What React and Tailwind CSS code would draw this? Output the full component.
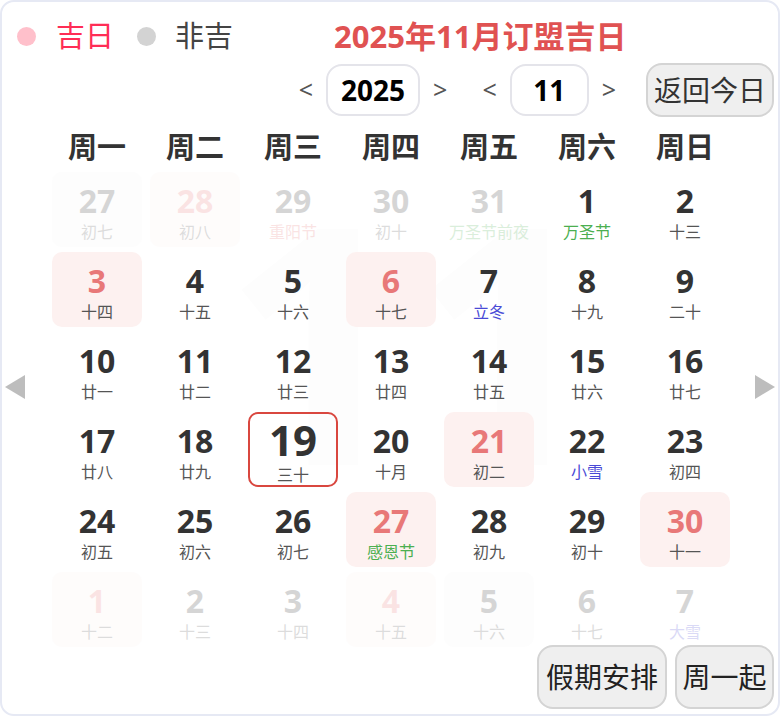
import React from 'react';

const FONT = { fontFamily: '"Noto Sans", "Noto Sans CJK SC", sans-serif' };

// kind: n normal, g good day (吉日), x grey marked
// tone: l lunar, f festival green, s solar term blue, r red festival
const days = [
  [27, '初七', 'x', 'l', true], [28, '初八', 'g', 'l', true], [29, '重阳节', 'n', 'r', true], [30, '初十', 'n', 'l', true], [31, '万圣节前夜', 'n', 'f', true], [1, '万圣节', 'n', 'f'], [2, '十三', 'n', 'l'],
  [3, '十四', 'g', 'l'], [4, '十五', 'n', 'l'], [5, '十六', 'n', 'l'], [6, '十七', 'g', 'l'], [7, '立冬', 'n', 's'], [8, '十九', 'n', 'l'], [9, '二十', 'n', 'l'],
  [10, '廿一', 'n', 'l'], [11, '廿二', 'n', 'l'], [12, '廿三', 'n', 'l'], [13, '廿四', 'n', 'l'], [14, '廿五', 'n', 'l'], [15, '廿六', 'n', 'l'], [16, '廿七', 'n', 'l'],
  [17, '廿八', 'n', 'l'], [18, '廿九', 'n', 'l'], [19, '三十', 't', 'l'], [20, '十月', 'n', 'l'], [21, '初二', 'g', 'l'], [22, '小雪', 'n', 's'], [23, '初四', 'n', 'l'],
  [24, '初五', 'n', 'l'], [25, '初六', 'n', 'l'], [26, '初七', 'n', 'l'], [27, '感恩节', 'g', 'f'], [28, '初九', 'n', 'l'], [29, '初十', 'n', 'l'], [30, '十一', 'g', 'l'],
  [1, '十二', 'g', 'l', true], [2, '十三', 'n', 'l', true], [3, '十四', 'n', 'l', true], [4, '十五', 'g', 'l', true], [5, '十六', 'x', 'l', true], [6, '十七', 'n', 'l', true], [7, '大雪', 'n', 's', true],
];

const weekdays = ['周一', '周二', '周三', '周四', '周五', '周六', '周日'];

const toneClass = {
  l: 'text-[#555]',
  f: 'text-[#4caf50]',
  s: 'text-[#4a4ad6]',
  r: 'text-[#e87878]',
};

const Cell = ({ d }) => {
  const [num, lunar, kind, tone, out] = d;
  const bg =
    kind === 'g' ? 'bg-[#fdf1f0]' : kind === 'x' ? 'bg-[#f6f6f6]' : kind === 't' ? 'border-2 border-[#d9473f]' : '';
  const numColor = kind === 'g' ? 'text-[#e87878]' : 'text-[#333]';
  return (
    <div className="h-[80px] px-[4px] pb-[5px]">
      <div className={`relative h-[75px] rounded-[10px] flex flex-col items-center ${bg} ${out ? 'opacity-20' : ''}`}>
        {kind === 't' ? (
          <span className="mt-[1px] leading-[50px] text-[42px] font-bold text-[#333]">{num}</span>
        ) : (
          <span className={`mt-[8px] leading-[42px] text-[32px] font-bold ${numColor}`}>{num}</span>
        )}
        <span className={`leading-[20px] text-[16px] whitespace-nowrap ${toneClass[tone]}`}>{lunar}</span>
      </div>
    </div>
  );
};

export default function App() {
  return (
    <div style={FONT} className="w-[780px] h-[716px] bg-white">
      <div className="relative w-[780px] h-[716px] rounded-[14px] border-2 border-[#e6e9f4] overflow-hidden flex flex-col">
        {/* faint month watermark behind the grid */}
        <div className="absolute left-[220px] top-[170px] text-[330px] font-bold leading-none text-[#fdfdfd] select-none pointer-events-none">11</div>

        <div className="relative flex items-center h-[40px] mt-[14px]">
          <span className="ml-[15px] w-[19px] h-[19px] rounded-full bg-[#ffc0cb]" />
          <span className="ml-[20px] text-[29px] leading-[40px] text-[#ff2d55]">吉日</span>
          <span className="ml-[23px] w-[19px] h-[19px] rounded-full bg-[#d3d3d3]" />
          <span className="ml-[19px] text-[29px] leading-[40px] text-[#444]">非吉</span>
          <span className="ml-[101px] text-[31px] leading-[40px] font-bold text-[#e05252]">2025年11月订盟吉日</span>
        </div>

        <div className="relative flex items-center justify-end h-[53px] mt-[7px] pr-[4px]">
          <span className="text-[25px] text-[#555]">&lt;</span>
          <div className="ml-[13px] w-[94px] h-[52px] rounded-[16px] border-2 border-[#e4e4ea] flex items-center justify-center text-[28px] font-bold text-black">2025</div>
          <span className="ml-[13px] text-[25px] text-[#555]">&gt;</span>
          <span className="ml-[35px] text-[25px] text-[#555]">&lt;</span>
          <div className="ml-[13px] w-[79px] h-[52px] rounded-[16px] border-2 border-[#e4e4ea] flex items-center justify-center text-[28px] font-bold text-black">11</div>
          <span className="ml-[13px] text-[25px] text-[#555]">&gt;</span>
          <button className="ml-[30px] w-[128px] h-[54px] rounded-[16px] border-2 border-[#d4d4d4] bg-[#efefef] text-[28px] text-[#333]">返回今日</button>
        </div>

        <div className="relative flex items-center">
          <div className="w-[46px] flex items-center pl-[3px] pt-[6px]">
            <svg width="20" height="24" viewBox="0 0 20 24"><polygon points="20,0 20,24 0,12" fill="#bdbdbd" /></svg>
          </div>
          <div className="w-[686px]">
            <div className="grid grid-cols-7 h-[56px] items-center pt-[6px]">
              {weekdays.map(w => (
                <div key={w} className="text-center text-[29px] font-bold text-[#333] leading-[38px]">{w}</div>
              ))}
            </div>
            <div className="grid grid-cols-7">
              {days.map((d, i) => (
                <Cell key={i} d={d} />
              ))}
            </div>
          </div>
          <div className="flex-1 flex items-center justify-end pr-[3px] pt-[6px]">
            <svg width="20" height="24" viewBox="0 0 20 24"><polygon points="0,0 0,24 20,12" fill="#bdbdbd" /></svg>
          </div>
        </div>

        <div className="relative flex justify-end gap-[8px] pr-[4px] mt-[-7px]">
          <button className="w-[130px] h-[64px] rounded-[16px] border-2 border-[#d4d4d4] bg-[#efefef] text-[28px] text-[#222]">假期安排</button>
          <button className="w-[99px] h-[64px] rounded-[16px] border-2 border-[#d4d4d4] bg-[#efefef] text-[28px] text-[#222]">周一起</button>
        </div>
      </div>
    </div>
  );
}
